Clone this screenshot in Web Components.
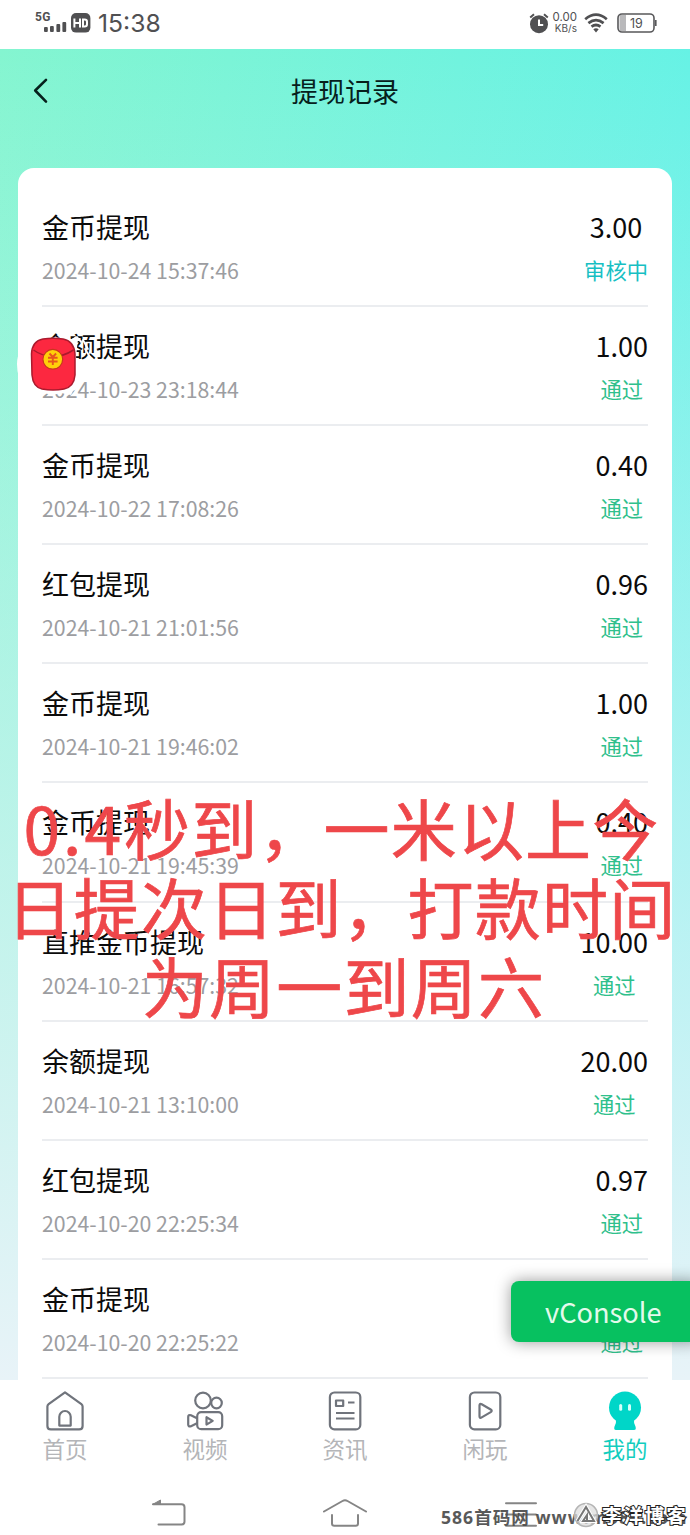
<!DOCTYPE html>
<html lang="zh-CN">
<head>
<meta charset="utf-8">
<title>提现记录</title>
<style>
  body {
    margin: 0;
    width: 690px;
    height: 1535px;
    overflow: hidden;
    background: #fff;
    font-family: "Noto Sans CJK SC", "Noto Sans", sans-serif;
  }
</style>
</head>
<body>
<withdraw-app></withdraw-app>

<script>
class BaseComponent extends HTMLElement {

  get html() {
    return `<slot></slot>`;
  }

  get css() {
    return ``;
  }

  constructor() {
    super();
    this.root = this.attachShadow({ mode: 'open' });
  }

  connectedCallback() {
    this.root.innerHTML = `<style>${this.css}</style>` + this.html;
  }

  /**
   * CamelCase class name to kebab-case element name.
   */
  static defineElement() {
    const elementName = this.name.replace(
      /([a-z0-9])([A-Z])/g, '$1-$2').toLowerCase();
    customElements.define(elementName, this);
  }
}

class StatusBar extends BaseComponent {
  get css() {
    return `
      :host {
        display: flex;
        justify-content: space-between;
        box-sizing: border-box;
        height: 49px;
        padding: 0 33px 4px 35px;
        color: #505052;
        font-family: Roboto, sans-serif;
      }
      div { display: flex; align-items: center; }
      svg { display: block; flex: none; overflow: visible; }
      .time { font: 24.7px/44px Inter, sans-serif; margin-left: 7px; }
      .speed { width: 25px; margin: 0 7px 0 3px; text-align: right; font: 10px/11px Inter, sans-serif; }
      .speed b { display: block; font-weight: 400; font-size: 11.5px; }
    `;
  }

  get html() {
    return `
      <div>
        <svg width="56" height="24" viewBox="0 0 56 24" fill="#505052">
          <text x="0" y="9.5" font-size="12" font-weight="700" font-family="Roboto" letter-spacing=".4">5G</text>
          <rect x="9" y="16" width="3.8" height="5" rx="1"/>
          <rect x="15" y="15" width="3.8" height="6" rx="1"/>
          <rect x="21.4" y="13" width="3.8" height="8" rx="1"/>
          <rect x="27.4" y="11" width="3.8" height="10" rx="1"/>
          <rect x="36" y="2" width="19.4" height="19.6" rx="5"/>
          <path d="M39.4 7.5v9M45 7.5v9M39.4 12H45M48 8.5h1.6q2.4 0 2.4 2.2v2.6q0 2.2-2.4 2.2H48z" fill="none" stroke="#fff" stroke-width="2"/>
        </svg>
        <span class="time">15:38</span>
      </div>
      <div>
        <svg width="20" height="22" viewBox="0 0 20 22">
          <circle cx="10" cy="12.2" r="9" fill="#505052"/>
          <path d="M1.2 5.4 5 2.2M18.8 5.4 15 2.2" stroke="#505052" stroke-width="2"/>
          <path d="M10 7.4V13h4.2" fill="none" stroke="#fff" stroke-width="2"/>
        </svg>
        <span class="speed"><b>0.00</b>KB/s</span>
        <svg width="24" height="20" viewBox="0 0 24 20" fill="none" stroke="#505052" stroke-width="2.7">
          <path d="M1.2 6.2Q12-2.8 22.8 6.2M4.4 10.1q7.6-6 15.2 0M7.5 13.7q4.5-3.4 9 0"/>
          <path d="M9.3 16.3q2.7-2 5.4 0L12 19.4z" fill="#505052" stroke="none"/>
        </svg>
        <svg width="40" height="20" viewBox="0 0 40 20" style="margin-left:9px">
          <rect x="2.5" y="2" width="6.5" height="16" fill="#b9b9bb"/>
          <rect x="1" y="1" width="36" height="18" rx="4" fill="none" stroke="#58585a" stroke-width="1.6"/>
          <rect x="38" y="7" width="1.6" height="6" fill="#58585a"/>
          <text x="19.3" y="14.6" text-anchor="middle" font-size="12.5" font-family="Inter" fill="#505052">19</text>
        </svg>
      </div>
    `;
  }
}
StatusBar.defineElement();

class NavHeader extends BaseComponent {
  get css() {
    return `
      :host {
        display: grid;
        grid-template-columns: 80px 1fr 80px;
        align-items: center;
        height: 83px;
      }
      svg { display: block; margin-left: 33px; }
      h1 { margin: 0; text-align: center; font-size: 27px; font-weight: 400; line-height: 40px; color: #06201c; }
    `;
  }

  get html() {
    return `
      <svg width="16" height="28" viewBox="0 0 16 28" fill="none" stroke="#06201c" stroke-width="2.6" stroke-linecap="round" stroke-linejoin="round">
        <path d="M13 2.8 2.2 13.5 13 24.6"/>
      </svg>
      <h1><slot></slot></h1>
    `;
  }
}
NavHeader.defineElement();

class RecordItem extends BaseComponent {
  get css() {
    return `
      :host {
        display: flex;
        justify-content: space-between;
        box-sizing: border-box;
        height: 119.2px;
        padding-top: 19px;
        border-bottom: 2px solid #ebedf0;
        color: #0b0b0b;
      }
      .title, .amount { font-size: 27px; line-height: 40px; }
      .date, .state { font-size: 21.3px; line-height: 32px; margin-top: 7px; }
      .date { color: #9c9da1; }
      .side { text-align: center; }
      .state { color: #2fc08c; }
      :host([pending]) .state { color: #17bfc3; }
    `;
  }

  get html() {
    return `
      <div>
        <div class="title"><slot></slot></div>
        <div class="date">${this.getAttribute('date')}</div>
      </div>
      <div class="side">
        <div class="amount">${this.getAttribute('amount')}</div>
        <div class="state">${this.hasAttribute('pending') ? '审核中' : '通过'}</div>
      </div>
    `;
  }
}
RecordItem.defineElement();

class RecordCard extends BaseComponent {
  get css() {
    return `
      :host {
        display: block;
        box-sizing: border-box;
        height: 1300px;
        margin: 36px 18px 0;
        padding: 19.5px 24px 0;
        border-radius: 16px;
        background: #fff;
      }
    `;
  }
}
RecordCard.defineElement();

class TabItem extends BaseComponent {
  get css() {
    return `
      :host {
        display: flex;
        flex-direction: column;
        align-items: center;
        color: #b4b5b8;
        font-size: 22.5px;
        line-height: 32px;
      }
      :host([active]) { color: #12cdbe; }
      svg { display: block; fill: none; stroke: #70747c; stroke-width: 2.2; stroke-linejoin: round; stroke-linecap: round; }
    `;
  }

  get html() {
    return `
      <svg width="44" height="42" viewBox="0 0 44 42">${TabItem.ICONS[this.getAttribute('icon')]}</svg>
      <slot></slot>
    `;
  }
}
TabItem.ICONS = {
  home: `
    <path d="M22 2.4 38.4 14.2q1.2.9 1.2 2.4V36q0 3.4-3.4 3.4H7.8Q4.4 39.4 4.4 36V16.6q0-1.5 1.2-2.4z"/>
    <path d="M16.3 35.6V26.7a5.7 5.7 0 0 1 11.4 0v8.9z"/>`,
  video: `
    <circle cx="20" cy="10.5" r="7.8"/>
    <circle cx="33.5" cy="13" r="5.3"/>
    <rect x="14.2" y="22.2" width="25" height="17" rx="4"/>
    <path d="M13.5 28 8 25.2Q5.2 24.5 5.2 27v7.5q0 2.5 2.8 1.8l5.5-2.8M23.5 27.2v7.4l6.2-3.7z"/>`,
  news: `
    <rect x="6.9" y="2.5" width="30.4" height="36.9" rx="4.5"/>
    <path d="M13 10.5h7.2v5.5H13zM25 12.5h6.5M13 23h18.5M13 28.5h18.5" stroke-linecap="butt"/>`,
  play: `
    <rect x="6.9" y="2.5" width="30.4" height="36.9" rx="4.5"/>
    <path d="M16.5 15.5q0-2.5 2.2-1.2l9 5.2q2 1.3 0 2.6l-9 5.3q-2.2 1.3-2.2-1.2z"/>`,
  mine: `
    <g stroke="none" fill="#00d6c8">
      <circle cx="22" cy="17.5" r="16"/>
      <path d="M13 29.5h18q-.5 4 1.5 7 1 3.5-1.5 3.5H13q-2.5 0-1.5-3.5 2-3 1.5-7z"/>
      <g fill="#d5fffa"><rect x="16.2" y="14" width="3" height="6.8" rx="1.5"/><rect x="25" y="14" width="3" height="6.8" rx="1.5"/></g>
    </g>`
};
TabItem.defineElement();

class TabBar extends BaseComponent {
  get css() {
    return `
      :host {
        display: grid;
        grid-template-columns: repeat(5, 140px);
        justify-content: center;
        box-sizing: border-box;
        height: 102px;
        padding-top: 10px;
        background: #fff;
      }
    `;
  }
}
TabBar.defineElement();

class SystemKeys extends BaseComponent {
  get css() {
    return `
      :host {
        display: grid;
        grid-template-columns: repeat(3, 176px);
        justify-content: center;
        justify-items: center;
        align-items: center;
        height: 53px;
      }
      svg { display: block; margin-top: 10px; fill: none; stroke: #858585; stroke-width: 2; stroke-linejoin: round; stroke-linecap: round; }
    `;
  }

  get html() {
    return `
      <svg width="36" height="30" viewBox="0 0 36 30"><path d="M2 5.2h28.5q3 0 3 3V22.500q0 3-3 3H7.500"/><path d="M2 5.200 9.500 1v4z" fill="#858585" stroke-width="1"/></svg>
      <svg width="46" height="30" viewBox="0 0 46 30"><path d="M2 12.500 20.500 2q2.500-1.400 5 0L44 12.500M10 16v8.500q0 2.200 2.200 2.200h21.600q2.200 0 2.200-2.200V16"/></svg>
      <svg width="36" height="30" viewBox="0 0 36 30"><path d="M3 4.200h30M3 15.500h30M3 26.800h30"/></svg>
    `;
  }
}
SystemKeys.defineElement();

class RedPacket extends BaseComponent {
  get css() {
    return `
      :host { position: absolute; left: 16px; top: 326px; }
      svg { display: block; }
    `;
  }

  get html() {
    return `
      <svg width="84" height="76" viewBox="0 0 84 76">
        <path d="M1 38q0-15 13-21l10-4q18-3 32 0l4-3 2 3-2 18 3 12-2 20-4 2-2 4-10-2-8 2-10-2Q8 64 3 52q-2-7-2-14z" fill="#fff"/>
        <path d="M61 11l4 5M67 14l5 9M69 23l5 8" stroke="#fff" stroke-width="1.8" stroke-linecap="round"/>
        <path d="M15.5 28Q16 15 27 13q10-1.5 20 0 11 2 12 15v21q-1 12-11 14-11 2-22 0-9-2-10-14z" fill="#fc2840" stroke="#ab1a2d" stroke-width="1.5"/>
        <path d="M17.5 24q9 6.5 19.5 6.5T57.5 24" fill="none" stroke="#ab1a2d" stroke-width="1.5"/>
        <circle cx="36.8" cy="33.3" r="9.9" fill="#ffcf0a" stroke="#c7371d" stroke-width="1.2"/>
        <path d="M33.5 27.5l3.3 3.5 3.3-3.5M32 31.7h9.6M32 35.5h9.6M36.8 31.5V39" fill="none" stroke="#e7541d" stroke-width="1.9"/>
      </svg>
    `;
  }
}
RedPacket.defineElement();

class ConsoleButton extends BaseComponent {
  get css() {
    return `
      :host {
        position: absolute;
        left: 511px;
        top: 1281px;
        box-sizing: border-box;
        width: 190px;
        height: 61px;
        padding-left: 34px;
        border-radius: 8px;
        background: #07c160;
        box-shadow: 0 0 16px rgba(0, 0, 0, .4);
        color: #e3faec;
        font-size: 27.2px;
        line-height: 60px;
      }
    `;
  }
}
ConsoleButton.defineElement();

class CaptionText extends BaseComponent {
  get css() {
    return `
      :host {
        position: absolute;
        left: 0;
        top: 787px;
        width: 683px;
        text-align: center;
        white-space: nowrap;
        color: #ee474a;
        -webkit-text-stroke: .7px #ee474a;
        font-size: 66px;
        letter-spacing: 1.2px;
        line-height: 79px;
      }
    `;
  }
}
CaptionText.defineElement();

class SiteMark extends BaseComponent {
  get css() {
    return `
      :host { position: absolute; left: 441px; top: 1502px; width: 249px; height: 33px; overflow: hidden; }
      .site { white-space: nowrap; font: 700 17.6px/31px "Open Sans", "Noto Sans CJK SC", sans-serif; letter-spacing: 1px; color: #4c4c4c; opacity: .92; }
      .blog { position: absolute; left: 132px; top: 0; display: flex; align-items: center; }
      .blog span {
        margin-left: 3px;
        white-space: nowrap;
        font: 700 19.5px/26px "Noto Sans CJK SC", sans-serif;
        letter-spacing: 1.9px;
        color: #fff;
        -webkit-text-stroke: 2px #222;
        paint-order: stroke fill;
      }
    `;
  }

  get html() {
    return `
      <div class="site">586首码网 www.m586.com</div>
      <div class="blog">
        <svg width="26" height="26" viewBox="0 0 26 26" fill="none" stroke="#fff">
          <circle cx="13" cy="13" r="11.5" fill="#ddd" fill-opacity=".75" stroke="#b5b5b5" stroke-width="1.5"/>
          <path d="M4.5 19 13 5l8 14H10l4-6v6" stroke="#fff" stroke-width="4"/>
          <path d="M4.5 19 13 5l8 14H10l4-6v6" stroke="#777" stroke-width="2"/>
        </svg>
        <span>李洋博客</span>
      </div>
    `;
  }
}
SiteMark.defineElement();

class WithdrawApp extends BaseComponent {
  get css() {
    return `
      :host { display: block; position: relative; width: 690px; height: 1535px; overflow: hidden; }
      main {
        height: 1331px;
        overflow: hidden;
        background:
          linear-gradient(180deg, rgba(232, 243, 248, 0), #e8f3f8),
          linear-gradient(100deg, #84f5d0, #5cf1ec);
      }
      .num { letter-spacing: 3px; }
      .comma { letter-spacing: -1px; }
      .last { padding-left: 4px; }
    `;
  }

  get html() {
    const items = WithdrawApp.RECORDS.map(([title, date, amount, pending]) =>
      `<record-item date="${date}" amount="${amount}" ${pending ? 'pending' : ''}>${title}</record-item>`
    ).join('');

    return `
      <status-bar></status-bar>
      <main>
        <nav-header>提现记录</nav-header>
        <record-card>${items}</record-card>
      </main>
      <tab-bar>
        <tab-item icon="home">首页</tab-item>
        <tab-item icon="video">视频</tab-item>
        <tab-item icon="news">资讯</tab-item>
        <tab-item icon="play">闲玩</tab-item>
        <tab-item icon="mine" active>我的</tab-item>
      </tab-bar>
      <system-keys></system-keys>
      <red-packet></red-packet>
      <console-button>vConsole</console-button>
      <caption-text><span class="num">0.4</span>秒到<span class="comma">，</span>一米以上今<br>日提次日到<span class="comma">，</span>打款时间<br><span class="last">为周一到周六</span></caption-text>
      <site-mark></site-mark>
    `;
  }
}
WithdrawApp.RECORDS = [
  ['金币提现', '2024-10-24 15:37:46', '3.00', true],
  ['余额提现', '2024-10-23 23:18:44', '1.00'],
  ['金币提现', '2024-10-22 17:08:26', '0.40'],
  ['红包提现', '2024-10-21 21:01:56', '0.96'],
  ['金币提现', '2024-10-21 19:46:02', '1.00'],
  ['金币提现', '2024-10-21 19:45:39', '0.40'],
  ['直推金币提现', '2024-10-21 16:57:32', '10.00'],
  ['余额提现', '2024-10-21 13:10:00', '20.00'],
  ['红包提现', '2024-10-20 22:25:34', '0.97'],
  ['金币提现', '2024-10-20 22:25:22', '0.40']
];
WithdrawApp.defineElement();
</script>
</body>
</html>
